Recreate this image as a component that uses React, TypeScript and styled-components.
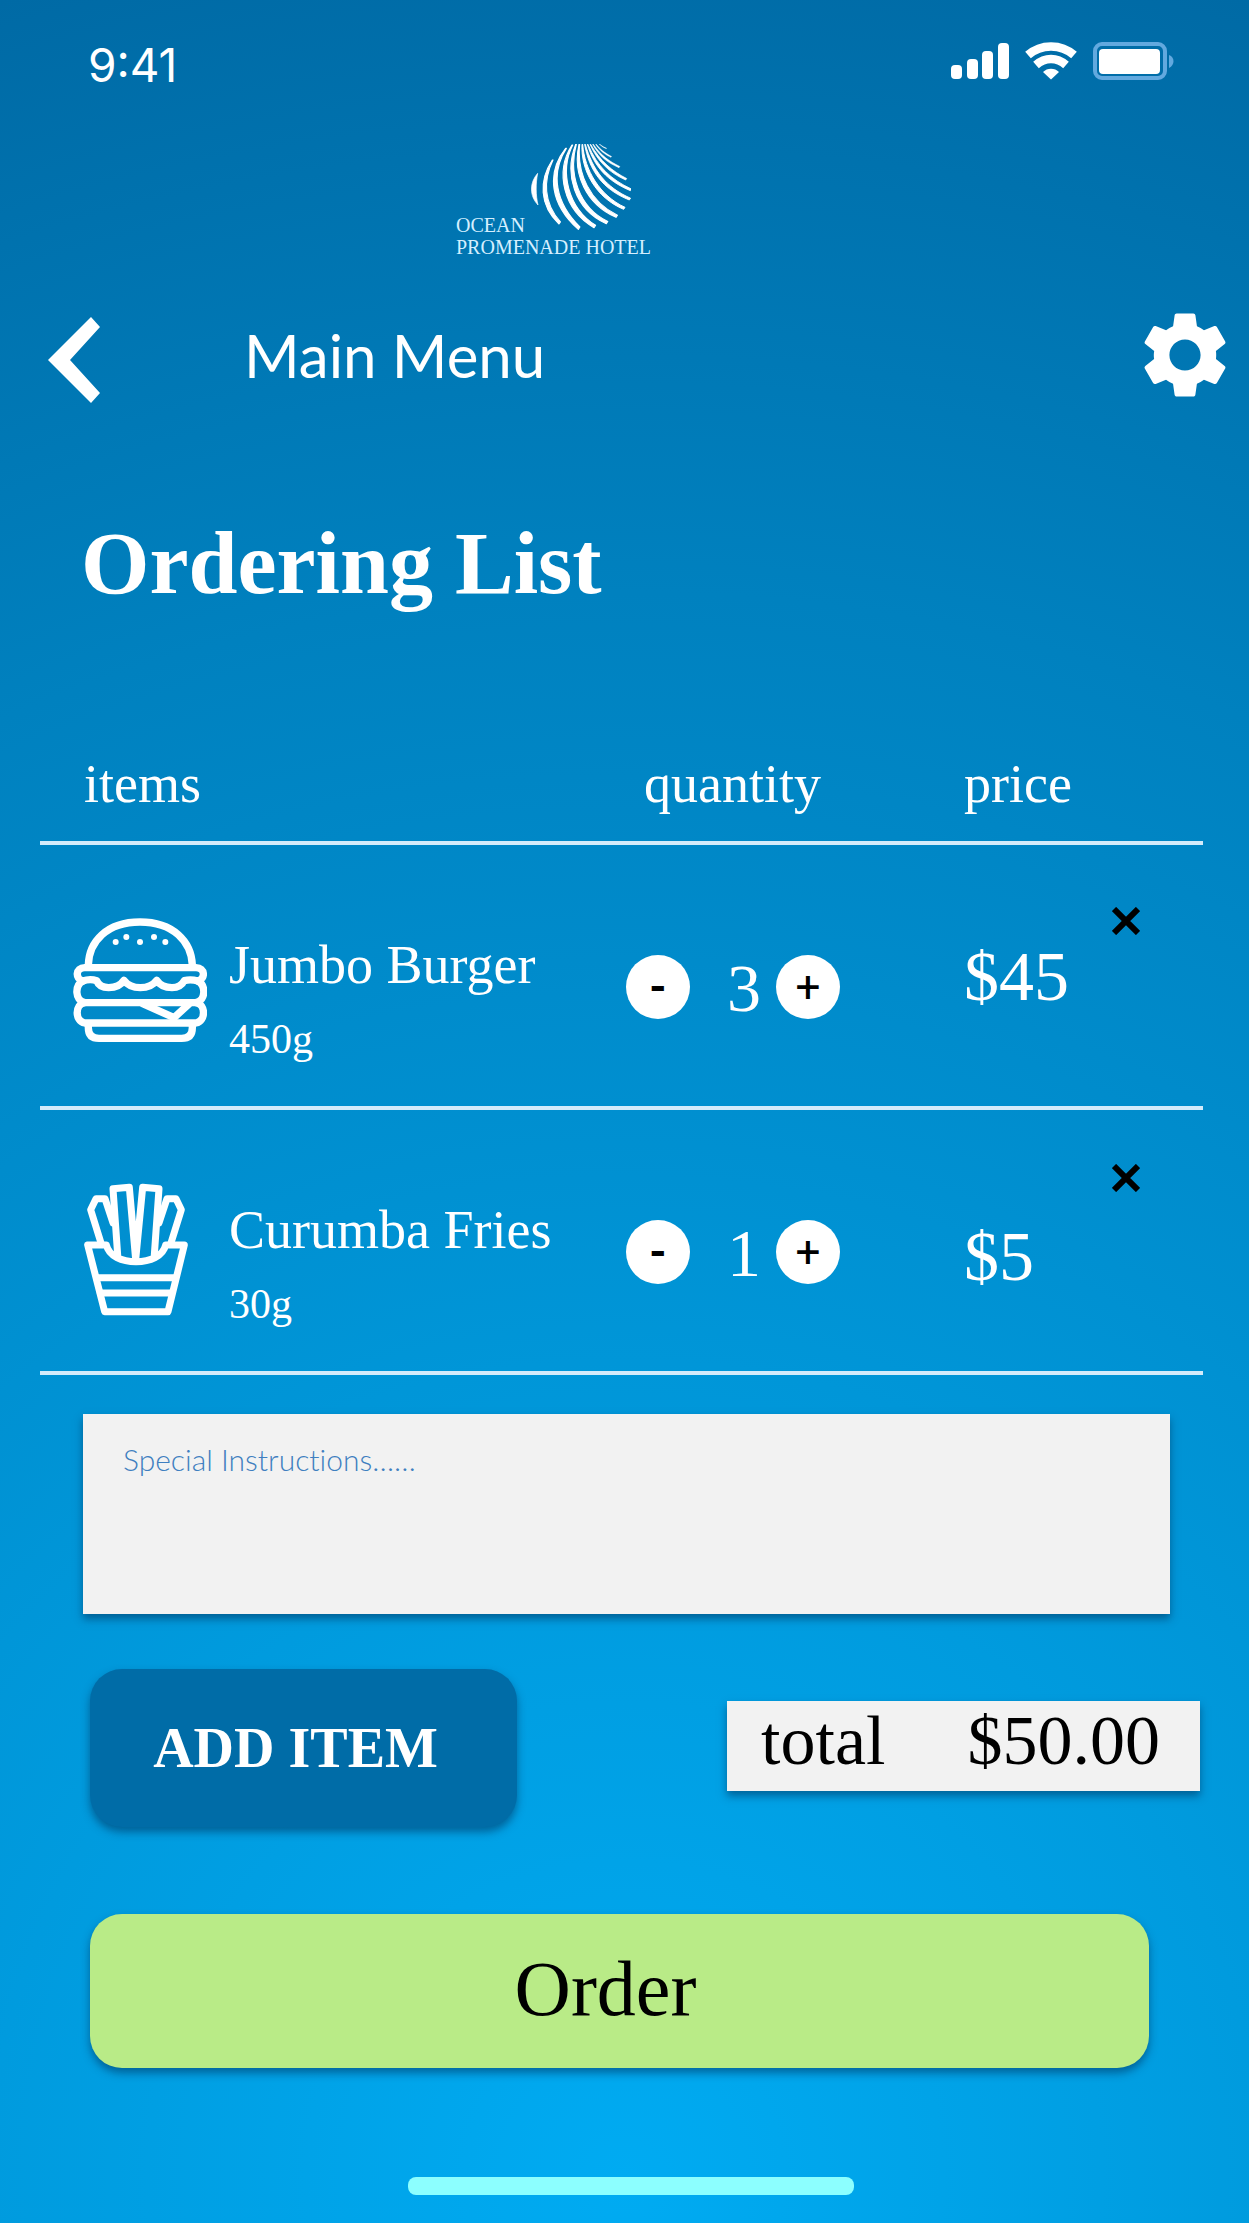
import React, { useState } from 'react';
import styled, { createGlobalStyle } from 'styled-components';
import { MdSettings } from 'react-icons/md';

const serif = '"Liberation Serif", "Times New Roman", serif';
const shadow = '0 5px 8px rgba(0, 40, 80, 0.5)';

const GlobalStyle = createGlobalStyle`
  *, *::before, *::after { box-sizing: border-box; }
  body { margin: 0; background: #006aa5; }
  button { border: 0; padding: 0; background: none; color: inherit; cursor: pointer; }
  svg { display: block; }
`;

const Page = styled.main`
  min-height: 100vh;
  padding-bottom: 29px;
  color: #fff;
  font-family: ${serif};
  background: radial-gradient(circle at 50% 98%, #00abf2 0%, #009bde 28%, #0081bf 70%, #006aa5 100%);
`;

const StatusBar = styled.div`
  display: flex;
  justify-content: space-between;
  align-items: flex-start;
  padding: 42px 74px 0 88px;
`;

const Clock = styled.time`
  font: 400 46px/46px Inter, sans-serif;
`;

const StatusIcons = styled.div`
  display: flex;
  gap: 16px;
`;

const Logo = styled.div`
  margin: 56px 0 0 456px;
  font-size: 20px;
  line-height: 24px;
  color: #d5efff;
`;

const LogoTop = styled.div`
  display: flex;
  align-items: flex-end;
  gap: 6px;
  height: 91px;
  line-height: 20px;

  svg { align-self: flex-start; }
`;

const NavBar = styled.nav`
  display: flex;
  align-items: center;
  height: 104px;
  margin-top: 44px;
  padding: 0 12px 0 48px;
`;

const BackButton = styled.button`
  padding-top: 10px;
`;

const NavTitle = styled.a`
  margin-left: 144px;
  color: inherit;
  text-decoration: none;
  font: 400 60px/72px Lato, sans-serif;
`;

const SettingsButton = styled.button`
  margin-left: auto;
`;

const Heading = styled.h1`
  margin: 107px 0 0;
  padding-left: 81px;
  font-size: 88px;
  line-height: 100px;
  font-weight: 700;
`;

const TableWrap = styled.div`
  padding: 140px 46px 0 40px;
`;

const Table = styled.table`
  width: 100%;
  table-layout: fixed;
  border-spacing: 0;
`;

const Th = styled.th<{ $width: string; $indent: number }>`
  width: ${(p) => p.$width};
  padding: 0 0 27px ${(p) => p.$indent}px;
  border-bottom: 4px solid #d3ebfb;
  text-align: left;
  font-weight: 400;
  font-size: 54px;
  line-height: 60px;
`;

const Td = styled.td<{ $top: number }>`
  height: 265px;
  padding: ${(p) => p.$top}px 0 0;
  border-bottom: 4px solid #d3ebfb;
  vertical-align: top;
`;

const Item = styled.div`
  display: flex;
  gap: 22px;
  padding-left: 33px;
`;

const ItemIcon = styled.div`
  display: flex;
  justify-content: center;
  flex: none;
  width: 134px;
`;

const ItemText = styled.div`
  display: grid;
  align-content: start;
  gap: 20px;
  padding-top: 17px;
  white-space: nowrap;
`;

const ItemName = styled.span`
  font-size: 54px;
  line-height: 60px;
`;

const ItemWeight = styled.span`
  font-size: 42px;
  line-height: 48px;
`;

const Stepper = styled.div`
  display: flex;
`;

const RoundButton = styled.button<{ $bold?: boolean }>`
  width: 64px;
  height: 64px;
  border-radius: 50%;
  background: #fff;
  color: #000;
  font: ${(p) => (p.$bold ? 700 : 400)} 44px/64px Roboto, sans-serif;
  text-align: center;
`;

const Quantity = styled.output`
  width: 64px;
  margin-left: 22px;
  font-size: 68px;
  line-height: 66px;
  text-align: center;
`;

const PriceCell = styled.div<{ $gap: number }>`
  display: flex;
  flex-direction: column;
  gap: ${(p) => p.$gap}px;
  padding-right: 63px;
`;

const RemoveButton = styled.button`
  align-self: flex-end;
`;

const Price = styled.span`
  font-size: 70px;
  line-height: 68px;
`;

const NotesField = styled.div`
  padding: 39px 79px 0 83px;
`;

const Notes = styled.textarea`
  display: block;
  width: 100%;
  height: 200px;
  padding: 27px 40px;
  border: 0;
  border-radius: 0;
  resize: none;
  background: #f2f2f2;
  box-shadow: ${shadow};
  color: #2f74b5;
  font: 300 30px/36px Lato, sans-serif;
  font-variant-ligatures: none;

  &::placeholder { color: #3f7fc0; opacity: 1; }
`;

const Actions = styled.div`
  display: flex;
  justify-content: space-between;
  align-items: flex-start;
  padding: 55px 49px 0 90px;
`;

const AddButton = styled.button`
  width: 427px;
  height: 158px;
  padding-right: 16px;
  border-radius: 32px;
  background: #006ca7;
  box-shadow: ${shadow};
  font: 700 56px/68px ${serif};
`;

const Total = styled.div`
  display: flex;
  gap: 82px;
  margin-top: 32px;
  padding: 6px 40px 16px 34px;
  background: #f2f2f2;
  box-shadow: ${shadow};
  color: #000;
  font-size: 70px;
  line-height: 68px;
`;

const OrderRow = styled.div`
  padding: 87px 100px 0 90px;
`;

const OrderButton = styled.button`
  display: block;
  width: 100%;
  height: 154px;
  padding: 0 28px 4px 0;
  border-radius: 32px;
  background: #b9eb87;
  box-shadow: ${shadow};
  color: #000;
  font: 400 78px/84px ${serif};
`;

const Footer = styled.footer`
  display: flex;
  justify-content: center;
  padding: 109px 0 0 12px;
`;

const HomeBar = styled.div`
  width: 446px;
  height: 18px;
  border-radius: 8px;
  background: #8cffff;
`;

const SignalIcon = () => (
  <svg width="58" height="38" fill="#fff" aria-hidden="true">
    <rect x="0" y="23" width="11" height="14" rx="4" />
    <rect x="16" y="17" width="11" height="20" rx="4" />
    <rect x="31" y="9" width="11" height="28" rx="4" />
    <rect x="47" y="1" width="11" height="36" rx="4" />
  </svg>
);

const WifiIcon = () => (
  <svg width="52" height="38" fill="none" stroke="#fff" aria-hidden="true">
    <path d="M3 13C16 1.500 36 1.500 49 13" strokeWidth="8.500" />
    <path d="M11 23C20 15 32 15 41 23" strokeWidth="8.500" />
    <path d="M26 37.500L18 30C22 25.500 30 25.500 34 30Z" fill="#fff" stroke="none" />
  </svg>
);

const BatteryIcon = () => (
  <svg width="82" height="38" fill="none" aria-hidden="true">
    <rect x="2" y="2" width="70" height="34" rx="7" stroke="#62a9df" strokeWidth="4" />
    <rect x="6" y="7" width="61" height="25" rx="4" fill="#fff" />
    <path d="M76 13C82 15 82 23 76 26Z" fill="#62a9df" />
  </svg>
);

// Each rib of the shell: start, two control points, end, and its thickness at the foot.
const ribs = [
  [365, 90, 325, 150, 325, 225, 385, 282, 13],
  [405, 55, 345, 130, 360, 225, 443, 298, 14],
  [424, 45, 372, 125, 398, 240, 490, 293, 14],
  [435, 43, 400, 130, 430, 238, 527, 281, 13],
  [445, 43, 425, 130, 465, 222, 556, 262, 13],
  [454, 43, 450, 120, 495, 203, 579, 238, 12],
  [462, 43, 475, 120, 515, 178, 596, 210, 11],
  [470, 43, 490, 110, 530, 153, 599, 182, 10],
  [478, 43, 500, 93, 535, 128, 585, 150, 9],
  [486, 43, 505, 78, 530, 98, 565, 113, 7],
  [495, 43, 508, 63, 525, 75, 541, 82, 5],
  [505, 42, 512, 49, 520, 54, 527, 56, 3],
];

const ShellMark = () => (
  <svg width="100" height="86" viewBox="301 42 300 258" fill="#fff" aria-hidden="true">
    <path d="M321 130C297 158 295 196 322 225C315 195 315 160 321 130Z" stroke="#fff" strokeWidth="2" />
    {ribs.map(([x0, y0, ax, ay, bx, by, x1, y1, w]) => (
      <path
        key={x0}
        d={`M${x0} ${y0}C${ax} ${ay} ${bx} ${by} ${x1} ${y1}L${x1 + w / 3} ${y1 - w / 2}C${bx + w} ${by - w / 2} ${ax + w} ${ay} ${x0 + 2} ${y0}Z`}
        stroke="#fff"
        strokeWidth={w / 4}
        strokeLinejoin="round"
      />
    ))}
  </svg>
);

const BackIcon = () => (
  <svg width="52" height="86" fill="#fff" aria-hidden="true">
    <path d="M43 0L52 10L22 43L52 76L43 86L0 43Z" />
  </svg>
);

const RemoveIcon = () => (
  <svg width="28" height="28" stroke="#000" strokeWidth="6" aria-hidden="true">
    <path d="M2 2L26 26M26 2L2 26" />
  </svg>
);

const BurgerIcon = () => (
  <svg
    width="134" height="125" viewBox="69 109 402 375" fill="none" stroke="#fff"
    strokeWidth="22" strokeLinecap="round" strokeLinejoin="round" aria-hidden="true"
  >
    <path d="M115 250C117 180 170 121 270 121S424 180 427 250" />
    <path d="M98 298C75 292 76 258 104 258H438C466 258 467 292 444 298" />
    <path d="M98 298Q120 290 140 297Q148 318 176 318Q208 318 222 296Q238 318 271 318Q304 318 320 296Q334 318 366 318Q392 318 403 297Q422 292 444 298" />
    <path d="M98 298C74 312 74 355 104 363H438C468 355 468 312 444 298" />
    <path d="M104 363C74 368 74 418 104 424H438C468 418 468 368 438 363" />
    <path d="M278 366L372 408L416 368" />
    <path d="M115 426V438Q115 470 147 470H395Q427 470 427 438V426" />
    <g fill="#fff" stroke="none">
      <circle cx="197" cy="181" r="9" />
      <circle cx="229" cy="166" r="9" />
      <circle cx="270" cy="181" r="9" />
      <circle cx="312" cy="166" r="9" />
      <circle cx="346" cy="181" r="9" />
    </g>
  </svg>
);

const FriesIcon = () => (
  <svg
    width="114" height="133" viewBox="98 125 342 399" fill="none" stroke="#fff"
    strokeWidth="21" strokeLinecap="round" strokeLinejoin="round" aria-hidden="true"
  >
    <path d="M112 311H168C176 345 215 361 257 361S338 345 346 311H402L353 511H163Z" />
    <path d="M140 409H374M150 455H364" />
    <path d="M202 340L188 142L237 138L256 355L277 138L326 142L312 340" />
    <path d="M153 308L121 205L137 172H164L188 245M361 308L393 205L377 172H350L326 245" />
  </svg>
);

const lineItems = [
  { id: 'burger', name: 'Jumbo Burger', weight: '450g', unit: 15, count: 3, icon: <BurgerIcon />, top: 62, gap: 8 },
  { id: 'fries', name: 'Curumba Fries', weight: '30g', unit: 5, count: 1, icon: <FriesIcon />, top: 54, gap: 31 },
];

export default function App() {
  const [items, setItems] = useState(lineItems);
  const change = (id: string, by: number) =>
    setItems((list) => list.map((i) => (i.id === id ? { ...i, count: Math.max(1, i.count + by) } : i)));
  const remove = (id: string) => setItems((list) => list.filter((i) => i.id !== id));
  const total = items.reduce((sum, i) => sum + i.unit * i.count, 0);

  return (
    <Page>
      <GlobalStyle />
      <StatusBar>
        <Clock>9:41</Clock>
        <StatusIcons>
          <SignalIcon />
          <WifiIcon />
          <BatteryIcon />
        </StatusIcons>
      </StatusBar>
      <Logo>
        <LogoTop>
          <span>OCEAN</span>
          <ShellMark />
        </LogoTop>
        <div>PROMENADE HOTEL</div>
      </Logo>
      <NavBar>
        <BackButton type="button" aria-label="Back"><BackIcon /></BackButton>
        <NavTitle href="#menu">Main Menu</NavTitle>
        <SettingsButton type="button" aria-label="Settings"><MdSettings size={104} /></SettingsButton>
      </NavBar>
      <Heading>Ordering List</Heading>
      <TableWrap>
        <Table>
          <thead>
            <tr>
              <Th scope="col" $width="auto" $indent={44}>items</Th>
              <Th scope="col" $width="338px" $indent={18}>quantity</Th>
              <Th scope="col" $width="239px" $indent={0}>price</Th>
            </tr>
          </thead>
          <tbody>
            {items.map((item) => (
              <tr key={item.id}>
                <Td $top={73}>
                  <Item>
                    <ItemIcon>{item.icon}</ItemIcon>
                    <ItemText>
                      <ItemName>{item.name}</ItemName>
                      <ItemWeight>{item.weight}</ItemWeight>
                    </ItemText>
                  </Item>
                </Td>
                <Td $top={110}>
                  <Stepper>
                    <RoundButton type="button" $bold aria-label={`Fewer ${item.name}`} onClick={() => change(item.id, -1)}>-</RoundButton>
                    <Quantity>{item.count}</Quantity>
                    <RoundButton type="button" aria-label={`More ${item.name}`} onClick={() => change(item.id, 1)}>+</RoundButton>
                  </Stepper>
                </Td>
                <Td $top={item.top}>
                  <PriceCell $gap={item.gap}>
                    <RemoveButton type="button" aria-label={`Remove ${item.name}`} onClick={() => remove(item.id)}>
                      <RemoveIcon />
                    </RemoveButton>
                    <Price>${item.unit * item.count}</Price>
                  </PriceCell>
                </Td>
              </tr>
            ))}
          </tbody>
        </Table>
      </TableWrap>
      <NotesField>
        <Notes aria-label="Special Instructions" placeholder="Special Instructions……" />
      </NotesField>
      <Actions>
        <AddButton type="button">ADD ITEM</AddButton>
        <Total>
          <span>total</span>
          <span>${total.toFixed(2)}</span>
        </Total>
      </Actions>
      <OrderRow>
        <OrderButton type="button">Order</OrderButton>
      </OrderRow>
      <Footer>
        <HomeBar />
      </Footer>
    </Page>
  );
}
